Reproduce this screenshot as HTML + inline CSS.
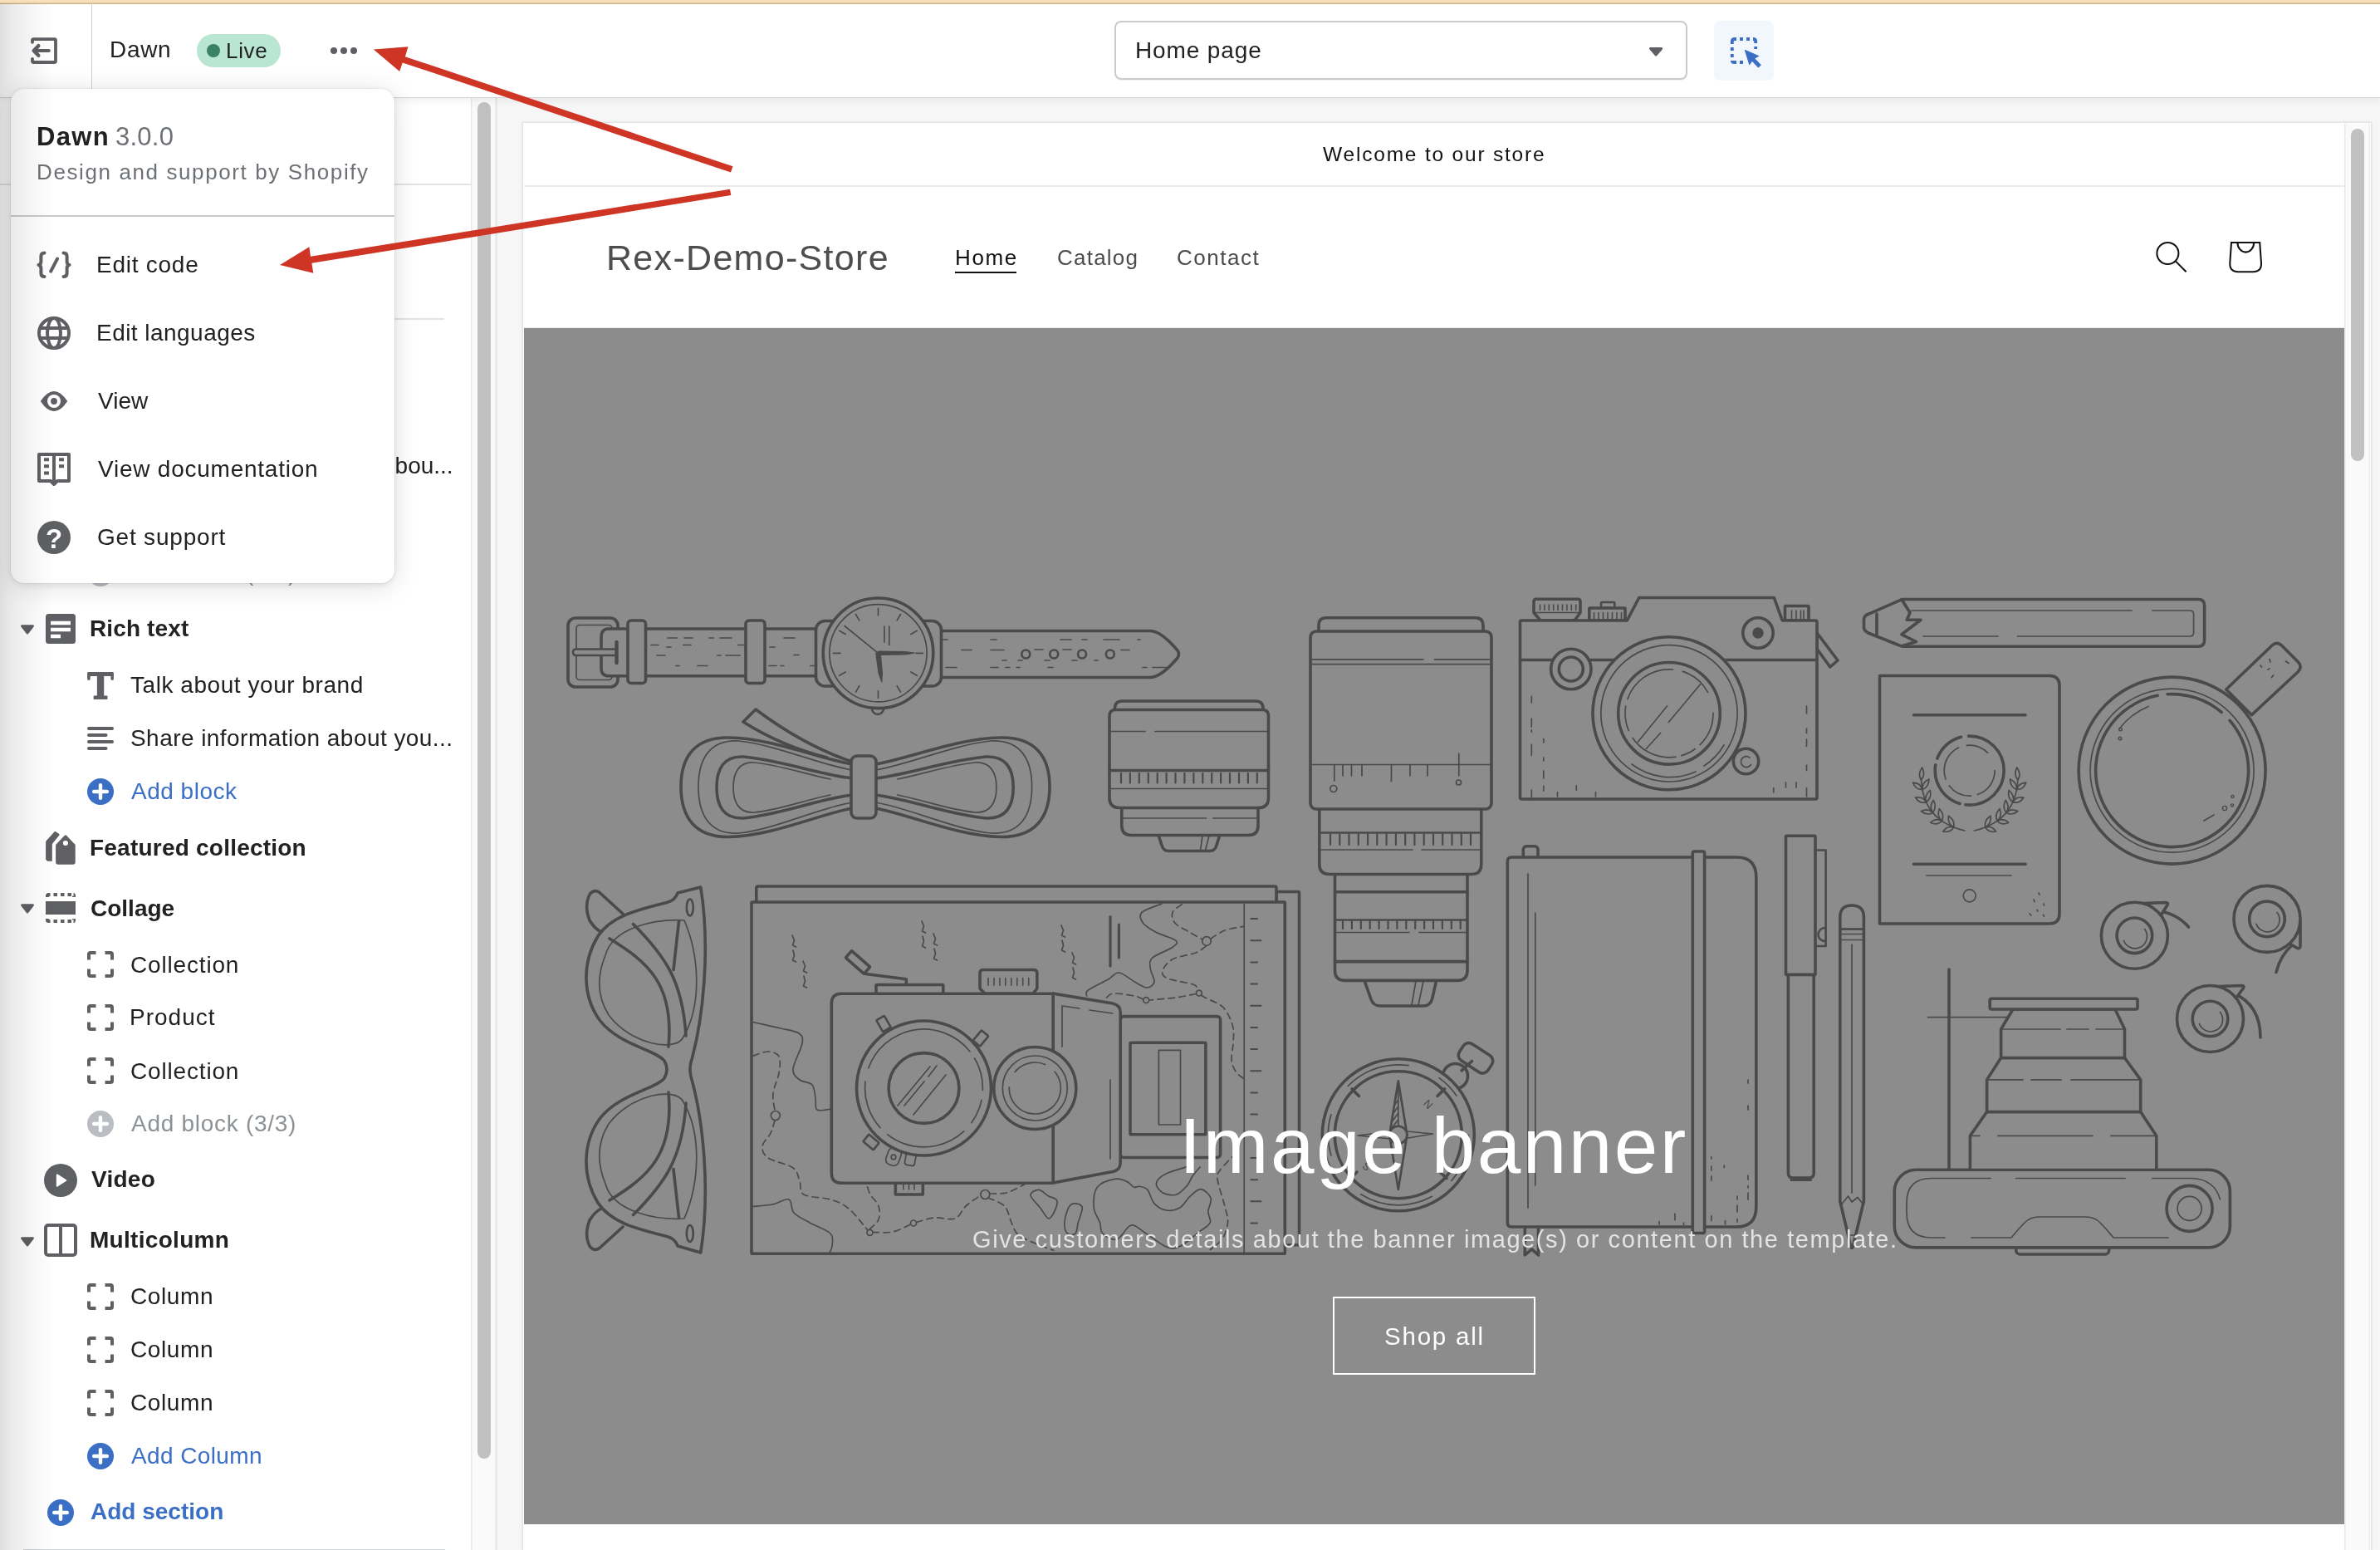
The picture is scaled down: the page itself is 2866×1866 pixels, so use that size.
<!DOCTYPE html>
<html lang="en"><head><meta charset="utf-8"><title>Dawn - Shopify theme editor</title>
<style>
html,body{margin:0;padding:0}
body{width:2866px;height:1866px;position:relative;overflow:hidden;background:#fff;font-family:"Liberation Sans",sans-serif;}
.a{position:absolute;display:block}
.t{position:absolute;display:block;margin:0;padding:0;white-space:nowrap;font-family:"Liberation Sans",sans-serif;text-decoration:none;will-change:transform}
.g{position:absolute;left:0;top:0;width:0;height:0;margin:0;padding:0}
</style></head><body>

<main class="g" aria-label="Theme preview">
<div class="a" style="left:596px;top:117px;width:2270px;height:1749px;background:#f6f6f7"></div>
<div class="a" style="left:630px;top:148px;width:2225px;height:1718px;background:#fff;box-shadow:0 0 0 1.5px #e3e4e6,0 1px 6px rgba(0,0,0,.06)"></div>
<div class="a" id="store" style="left:631px;top:149px;width:2192px;height:1717px;background:#fff;overflow:hidden">
</div>
<div class="a" style="left:631px;top:223px;width:2192px;height:2px;background:#ebebeb"></div>
<p class="t" id="welcome" style="left:1593.00px;top:174.26px;font-size:24.5px;line-height:24.5px;color:#121212;font-weight:400;letter-spacing:1.802px;">Welcome to our store</p>
<h1 class="t" id="rex" style="left:730.25px;top:289.10px;font-size:43px;line-height:43px;color:#4d4d4d;font-weight:400;letter-spacing:1.308px;">Rex-Demo-Store</h1>
<a class="t" id="home" style="left:1149.80px;top:296.99px;font-size:26px;line-height:26px;color:#121212;font-weight:400;letter-spacing:1.603px;">Home</a>
<div class="a" style="left:1150px;top:326.5px;width:74px;height:2.2px;background:#121212"></div>
<a class="t" id="catalog" style="left:1273.00px;top:296.99px;font-size:26px;line-height:26px;color:#4b4b4b;font-weight:400;letter-spacing:1.231px;">Catalog</a>
<a class="t" id="contact" style="left:1417.00px;top:296.99px;font-size:26px;line-height:26px;color:#4b4b4b;font-weight:400;letter-spacing:1.500px;">Contact</a>
<svg class="a" style="left:2580px;top:280px" width="160" height="60" viewBox="2580 280 160 60" fill="none" stroke="#121212" stroke-width="2.05">
<circle cx="2610.4" cy="305" r="13"/><path d="M2619.8 314.4 L2632.6 327.2"/>
<path d="M2687 292 H2721.2 L2723 316.5 Q2723.6 327.2 2713 327.2 H2695.2 Q2684.8 327.2 2685.3 316.5 Z" stroke-linejoin="miter"/>
<path d="M2694.4 292 A9.9 11.6 0 0 0 2714.2 292"/>
</svg>
<div class="a" style="left:631px;top:393.5px;width:2192px;height:1.5px;background:#e9e9e9"></div>
<div class="a" style="left:631px;top:395px;width:2192px;height:1440px;background:#8c8c8c"></div>
<svg class="a" style="left:631px;top:395px" width="2192" height="1440" viewBox="631 395 2192 1440" fill="none" stroke="#4a4a4a" stroke-linecap="round" stroke-linejoin="round">
<g id="watch">
<rect x="684.0" y="744.0" width="60.0" height="83.0" rx="9" stroke-width="3.6" fill="#8c8c8c" />
<rect x="694.0" y="752.5" width="43.0" height="66.0" rx="4" stroke-width="1.7" fill="none" />
<path d="M982 757H733Q724 757 724 767V804Q724 813.8 733 813.8H982" stroke-width="3.6" fill="#8c8c8c" />
<path d="M742.5 781.5H694Q690 781.5 690 785.2Q690 789 694 789H742.5" stroke-width="2.6" fill="#8c8c8c" />
<path d="M742.5 773.0L742.5 798.0" stroke-width="4.4" />
<rect x="756.0" y="747.0" width="21.5" height="75.5" rx="4" stroke-width="3.6" fill="#8c8c8c" />
<rect x="898.0" y="747.0" width="23.0" height="75.5" rx="4" stroke-width="3.6" fill="#8c8c8c" />
<path d="M804 768H815M824 768H834M854 768H859M867 768H881 M784 776.5H793M803 779H808M823 776.5H832M889 776.5H897 M791 789H801M864 789H868M874 789H891 M814 801.5H818M840 801.5H852 M944 768H957M927 779H933M956 788.5H962M926 801.5H935M940 801.5H944M976 801.5H981" stroke-width="1.7" fill="none" />
<path d="M1133 759.5H1385Q1398 759.5 1418 783Q1421 787.5 1418 792Q1398 815.5 1385 815.5H1133Z" stroke-width="3.6" fill="#8c8c8c" />
<circle cx="1235.3" cy="787.5" r="5.0" stroke-width="2.6" fill="#8c8c8c" />
<circle cx="1269.2" cy="787.5" r="5.0" stroke-width="2.6" fill="#8c8c8c" />
<circle cx="1303.0" cy="787.5" r="5.0" stroke-width="2.6" fill="#8c8c8c" />
<circle cx="1336.8" cy="787.5" r="5.0" stroke-width="2.6" fill="#8c8c8c" />
<path d="M1133 770H1141M1193 770H1200M1158 782.5H1170M1193 782.5H1209M1246 782H1256M1280 782H1290M1350 782.5H1360M1207 795H1212M1226 795H1231M1258 795H1264M1291 795H1297M1318 795H1322M1139 803.5H1152M1193 803.5H1202M1211 803.5H1216M1224 803.5H1228M1262 803.5H1268M1376 803.5H1381M1388 803.5H1404M1277 770H1290M1303 770H1309M1329 770H1348M1370 770H1373" stroke-width="1.7" fill="none" />
<rect x="982.5" y="747.5" width="39.5" height="78.5" rx="11" stroke-width="3.6" fill="#8c8c8c" />
<rect x="1093.0" y="747.5" width="40.5" height="78.5" rx="11" stroke-width="3.6" fill="#8c8c8c" />
<circle cx="1057.0" cy="853.0" r="7.0" stroke-width="2.6" fill="#8c8c8c" />
<circle cx="1057.5" cy="786.3" r="66.3" stroke-width="3.6" fill="#8c8c8c" />
<circle cx="1057.5" cy="786.3" r="58.6" stroke-width="1.7" fill="none" />
<path d="M1057.5 740.8L1057.5 732.3M1080.2 746.9L1084.5 739.5M1096.9 763.5L1104.3 759.3M1103.0 786.3L1111.5 786.3M1096.9 809.0L1104.3 813.3M1080.2 825.7L1084.5 833.1M1057.5 831.8L1057.5 840.3M1034.8 825.7L1030.5 833.1M1018.1 809.0L1010.7 813.3M1012.0 786.3L1003.5 786.3M1018.1 763.5L1010.7 759.3M1034.8 746.9L1030.5 739.5" stroke-width="1.7" fill="none" />
<path d="M1065 754V773M1070.8 754V776.5" stroke-width="1.7" fill="none" />
<path d="M1057.5 786.3L1017.0 753.5" stroke-width="1.7" />
<path d="M1057.5 784.2L1090 784.6L1101 786.2L1090 787.8L1057.5 788.4Z" stroke-width="1.2" fill="#4a4a4a" />
<path d="M1054.8 786.3L1058 810L1061.8 821L1062.4 810L1060.2 786.3Z" stroke-width="1.2" fill="#4a4a4a" />
</g>
<g id="bow">
<path d="M996 912C960 903 925 888 895 869L910 854C950 884 990 905 1026 917" stroke-width="3.6" fill="#8c8c8c" />
<path d="M1026.0 920.0C985.0 913.0 930.0 889.0 878.0 888.0C838.0 887.0 820.0 910.0 820.0 947.0C820.0 985.0 838.0 1008.0 878.0 1007.5C930.0 1006.0 985.0 981.0 1026.0 973.0" stroke-width="3.6" fill="none" />
<path d="M1026.0 927.0C985.0 920.0 935.0 897.0 890.0 892.0C856.0 890.0 841.0 912.0 841.0 947.0C841.0 983.0 856.0 1005.0 890.0 1003.0C935.0 998.0 985.0 973.0 1026.0 966.0" stroke-width="1.7" fill="none" />
<path d="M1026.0 937.0C985.0 932.0 940.0 915.0 895.0 911.0C872.0 910.0 863.0 925.0 863.0 948.0C863.0 971.0 872.0 986.0 895.0 985.0C940.0 981.0 985.0 962.0 1026.0 957.0" stroke-width="3.6" fill="none" />
<path d="M1000.0 938.0C970.0 932.0 935.0 920.0 908.0 918.0C890.0 917.0 883.0 930.0 883.0 948.0C883.0 966.0 890.0 979.0 908.0 978.0C935.0 976.0 970.0 963.0 1000.0 957.0" stroke-width="1.7" fill="none" />
<path d="M1054.3 920.0C1096.0 913.0 1152.0 889.0 1204.9 888.0C1245.7 887.0 1264.0 910.0 1264.0 947.0C1264.0 985.0 1245.7 1008.0 1204.9 1007.5C1152.0 1006.0 1096.0 981.0 1054.3 973.0" stroke-width="3.6" fill="none" />
<path d="M1054.3 927.0C1096.0 920.0 1146.9 897.0 1192.7 892.0C1227.3 890.0 1242.6 912.0 1242.6 947.0C1242.6 983.0 1227.3 1005.0 1192.7 1003.0C1146.9 998.0 1096.0 973.0 1054.3 966.0" stroke-width="1.7" fill="none" />
<path d="M1054.3 937.0C1096.0 932.0 1141.8 915.0 1187.6 911.0C1211.1 910.0 1220.2 925.0 1220.2 948.0C1220.2 971.0 1211.1 986.0 1187.6 985.0C1141.8 981.0 1096.0 962.0 1054.3 957.0" stroke-width="3.6" fill="none" />
<path d="M1080.7 938.0C1111.3 932.0 1146.9 920.0 1174.4 918.0C1192.7 917.0 1199.9 930.0 1199.9 948.0C1199.9 966.0 1192.7 979.0 1174.4 978.0C1146.9 976.0 1111.3 963.0 1080.7 957.0" stroke-width="1.7" fill="none" />
<rect x="1025.0" y="910.0" width="30.0" height="75.0" rx="7" stroke-width="3.6" fill="#8c8c8c" />
</g>
<g id="lens1">
<path d="M1395 1005.5L1399.5 1019Q1401.5 1024.5 1407.5 1024.5H1456.5Q1462.5 1024.5 1464.5 1019L1468.8 1005.5" stroke-width="3.6" fill="#8c8c8c" />
<path d="M1448 1006L1445.5 1024M1456 1006L1451.5 1024" stroke-width="1.7" fill="none" />
<path d="M1350.8 972.5V994Q1350.8 1005.5 1362.3 1005.5H1503.5Q1515 1005.5 1515 994V972.5" stroke-width="3.6" fill="#8c8c8c" />
<path d="M1352.0 985.0H1452.5M1461.0 985.0H1513.0" stroke-width="1.7" fill="none" />
<path d="M1342.5 856V853Q1342.5 844 1351.5 844H1512Q1521 844 1521 853V856" stroke-width="3.6" fill="#8c8c8c" />
<path d="M1336 862Q1336 854.5 1343.5 854.5H1520Q1527.5 854.5 1527.5 862V960.5Q1527.5 972.5 1515.5 972.5H1348Q1336 972.5 1336 960.5Z" stroke-width="3.6" fill="#8c8c8c" />
<path d="M1338.0 880.5H1379.0M1391.0 880.5H1525.5" stroke-width="1.7" fill="none" />
<path d="M1336.0 927.5H1527.5" stroke-width="3.6" fill="none" />
<path d="M1350.0 931.0V942.5M1360.9 931.0V942.5M1371.8 931.0V942.5M1382.8 931.0V942.5M1393.7 931.0V942.5M1404.6 931.0V942.5M1415.5 931.0V942.5M1426.4 931.0V942.5M1437.4 931.0V942.5M1448.3 931.0V942.5M1459.2 931.0V942.5M1470.1 931.0V942.5M1481.0 931.0V942.5M1492.0 931.0V942.5M1502.9 931.0V942.5M1513.8 931.0V942.5" stroke-width="2.2" fill="none" />
<path d="M1338.0 949.5H1525.5" stroke-width="1.7" fill="none" />
</g>
<g id="lens2">
<path d="M1643 1180.4L1651 1203Q1654 1211 1662 1211H1714Q1722 1211 1724.5 1203L1729.7 1180.4" stroke-width="3.6" fill="#8c8c8c" />
<path d="M1705 1181L1700 1210M1714 1181L1708 1210" stroke-width="1.7" fill="none" />
<path d="M1607.5 1052.5V1168.5Q1607.5 1180.4 1619.5 1180.4H1755Q1767 1180.4 1767 1168.5V1052.5" stroke-width="3.6" fill="#8c8c8c" />
<path d="M1607.5 1073.8H1767.0" stroke-width="3.6" fill="none" />
<path d="M1608.0 1107.5H1766.5" stroke-width="2.4" fill="none" />
<path d="M1617.0 1109.0V1118.0M1627.9 1109.0V1118.0M1638.8 1109.0V1118.0M1649.7 1109.0V1118.0M1660.6 1109.0V1118.0M1671.5 1109.0V1118.0M1682.4 1109.0V1118.0M1693.3 1109.0V1118.0M1704.2 1109.0V1118.0M1715.1 1109.0V1118.0M1726.0 1109.0V1118.0M1736.9 1109.0V1118.0M1747.8 1109.0V1118.0M1758.7 1109.0V1118.0" stroke-width="2.2" fill="none" />
<path d="M1609.0 1122.5H1697.0M1709.0 1122.5H1765.5" stroke-width="1.7" fill="none" />
<path d="M1607.5 1157.6H1767.0" stroke-width="3.6" fill="none" />
<path d="M1588.8 974V1040.5Q1588.8 1052.5 1600.8 1052.5H1771.8Q1783.8 1052.5 1783.8 1040.5V974" stroke-width="3.6" fill="#8c8c8c" />
<path d="M1589.0 1002.5H1783.5" stroke-width="2.4" fill="none" />
<path d="M1602.0 1004.0V1017.0M1613.3 1004.0V1017.0M1624.5 1004.0V1017.0M1635.8 1004.0V1017.0M1647.1 1004.0V1017.0M1658.3 1004.0V1017.0M1669.6 1004.0V1017.0M1680.9 1004.0V1017.0M1692.2 1004.0V1017.0M1703.4 1004.0V1017.0M1714.7 1004.0V1017.0M1726.0 1004.0V1017.0M1737.2 1004.0V1017.0M1748.5 1004.0V1017.0M1759.8 1004.0V1017.0M1771.0 1004.0V1017.0" stroke-width="2.2" fill="none" />
<path d="M1590.0 1023.0H1701.0M1712.0 1023.0H1782.5" stroke-width="1.7" fill="none" />
<path d="M1588 762V753Q1588 743.8 1597 743.8H1777Q1786 743.8 1786 753V762" stroke-width="3.6" fill="#8c8c8c" />
<rect x="1578.0" y="760.0" width="218.0" height="214.0" rx="7" stroke-width="3.6" fill="#8c8c8c" />
<path d="M1580.0 793.8H1713.8M1727.5 793.8H1794.0" stroke-width="1.7" fill="none" />
<path d="M1580.0 799.6H1794.0" stroke-width="1.7" fill="none" />
<path d="M1580.0 920.5H1794.0" stroke-width="1.7" fill="none" />
<path d="M1606.8 921V940M1675.5 921V940.5M1617 921V933.8M1627.5 921V933.8M1640 921V933.8M1698 921V933.8M1719 921V933.8M1756.8 907V933.8" stroke-width="1.7" fill="none" />
<circle cx="1605.8" cy="949.5" r="4.0" stroke-width="1.7" fill="none" />
<circle cx="1756.5" cy="942.0" r="3.0" stroke-width="1.7" fill="none" />
</g>
<g id="notebook">
<path d="M1836.3 1477V1511L1844.5 1503.8L1852.5 1511V1477" stroke-width="3.6" fill="#8c8c8c" />
<rect x="1834.3" y="1018.8" width="17.7" height="17.2" rx="4" stroke-width="3.6" fill="#8c8c8c" />
<path d="M1820 1032H2091Q2114.8 1032 2114.8 1056V1453Q2114.8 1477 2091 1477H1820Q1815.3 1477 1815.3 1472V1037Q1815.3 1032 1820 1032Z" stroke-width="3.6" fill="#8c8c8c" />
<path d="M1840 1052V1454M1848.8 1099V1427" stroke-width="1.7" fill="none" />
<rect x="2038.3" y="1025.0" width="14.3" height="459.5" rx="2" stroke-width="3.6" fill="#8c8c8c" />
<path d="M2105 1300V1304M2105 1331V1336M2105 1415V1420M2105 1427.5V1430M2105 1436V1444M2060.8 1392.5V1395M2060.8 1404V1409M2060.8 1416V1421M2076.3 1403V1405.5M2092 1440V1444M2092 1451V1459M1998 1470.5V1473.8M2017 1461V1468.8M2027.5 1472V1474.5M2060.8 1463.8V1469.5M2077.5 1469.5V1473.8M2092 1467.5V1471" stroke-width="1.7" fill="none" />
</g>
<g id="pen">
<path d="M2186 1023.5H2198.6V1139H2186" stroke-width="2.6" fill="#8c8c8c" />
<path d="M2197.5 1117A8 8 0 0 0 2197.5 1133" stroke-width="2.6" fill="none" />
<path d="M2153.4 1173V1412Q2153.4 1418 2159 1418H2178.5Q2184.2 1418 2184.2 1412V1173" stroke-width="3.6" fill="#8c8c8c" />
<path d="M2157 1420.5H2180.5" stroke-width="3" fill="none" />
<rect x="2150.5" y="1006.2" width="35.5" height="167.2" rx="1" stroke-width="3.6" fill="#8c8c8c" />
</g>
<g id="pencilv">
<path d="M2215.8 1104Q2215.8 1090 2230 1090Q2244.4 1090 2244.4 1104V1446L2231.5 1500Q2230 1505 2228.6 1500L2215.8 1446Z" stroke-width="3.6" fill="#8c8c8c" />
<path d="M2216 1118.5H2244M2216 1124.5H2244M2216 1131.5H2244" stroke-width="1.7" fill="none" />
<path d="M2216.0 1118.5L2244.0 1118.5" stroke-width="2.4" />
<path d="M2230 1137V1436" stroke-width="1.7" fill="none" />
<path d="M2217.5 1450L2225.5 1440L2230 1447L2237 1441.5L2243 1449" stroke-width="1.7" fill="none" />
<path d="M2226.5 1487L2233.5 1487" stroke-width="1.7" fill="none" />
</g>
<g id="compass">
<g transform="rotate(33 1777 1273.8)">
<rect x="1756.5" y="1261.8" width="41.0" height="24.0" rx="8" stroke-width="3.6" fill="#8c8c8c" />
</g>
<circle cx="1752.5" cy="1295.5" r="15.0" stroke-width="3.6" fill="#8c8c8c" />
<path d="M1760.0 1288.8L1772.5 1277.5" stroke-width="3.6" />
<circle cx="1683.8" cy="1366.3" r="91.5" stroke-width="3.6" fill="#8c8c8c" />
<circle cx="1683.8" cy="1366.3" r="76.5" stroke-width="3.6" fill="#8c8c8c" />
<circle cx="1683.8" cy="1366.3" r="84.5" stroke-width="1.7" fill="none" stroke-dasharray="60 30 90 60 50 40 80 40 30 50.9"/>
<path d="M1628 1311L1636.5 1319.5M1739.5 1311L1731 1319.5M1742 1418.5L1734 1411M1626 1418.5L1634 1411" stroke-width="3.6" fill="none" />
<path d="M1635 1367L1683.8 1361L1725.5 1365L1683.8 1372Z" stroke-width="1.7" fill="none" />
<path d="M1683.8 1301.3L1694.4 1366.3L1683.8 1432L1673.2 1366.3Z" stroke-width="2.6" fill="#8c8c8c" />
<path d="M1683.8 1309V1360M1679.5 1330L1683.8 1324M1678 1340L1683.8 1332M1676.5 1350L1683.8 1340M1675 1359L1683.8 1348" stroke-width="1.7" fill="none" />
<circle cx="1683.8" cy="1366.3" r="10.5" stroke-width="2.6" fill="#8c8c8c" />
<text x="1720" y="1334" font-family="Liberation Sans,sans-serif" font-size="13" fill="#4a4a4a" stroke="none" transform="rotate(45 1720 1329)" text-anchor="middle">N</text>
<text x="1646" y="1408" font-family="Liberation Sans,sans-serif" font-size="13" fill="#4a4a4a" stroke="none" transform="rotate(225 1646 1404)" text-anchor="middle">S</text>
</g>
<g id="glasses">
<path d="M750 1100L722 1074.5Q716 1070 710.5 1076Q703 1090 710 1108Q716 1118 724 1122" stroke-width="3.6" fill="#8c8c8c" />
<path d="M750 1477L722 1502.5Q716 1507 710.5 1501Q703 1487 710 1469Q716 1459 724 1455" stroke-width="3.6" fill="#8c8c8c" />
<path d="M843.8 1068L816 1075Q813 1084 803 1086.5C768 1095 736 1103 720 1127C700 1160 702 1200 722 1228C745 1258 790 1264 800 1277Q806 1287.5 800 1298C790 1311 745 1317 722 1347C702 1375 700 1415 720 1448C736 1472 768 1480 803 1488.5Q813 1491 816 1500L843.8 1508C856 1430 846 1345 832 1296Q830 1287.5 832 1279C846 1230 856 1145 843.8 1068Z" stroke-width="3.6" fill="#8c8c8c" />
<path d="M729 1150.0C738 1116.0 790 1106.0 824 1108.0C842 1150.0 846 1210.0 822 1250.0C812 1266.0 760 1258.0 733 1222.0C718 1198.0 720 1172.0 729 1150.0Z" stroke-width="1.7" fill="none" />
<path d="M762.5 1112.5C800 1150.0 822 1180.0 826 1247.0" stroke-width="3.6" fill="none" />
<path d="M734 1130.0C780 1158.0 812 1185.0 805 1260.0" stroke-width="3.6" fill="none" />
<path d="M817.5 1109.0L811 1167.5" stroke-width="3.6" fill="none" />
<path d="M729 1425.0C738 1459.0 790 1469.0 824 1467.0C842 1425.0 846 1365.0 822 1325.0C812 1309.0 760 1317.0 733 1353.0C718 1377.0 720 1403.0 729 1425.0Z" stroke-width="1.7" fill="none" />
<path d="M762.5 1462.5C800 1425.0 822 1395.0 826 1328.0" stroke-width="3.6" fill="none" />
<path d="M734 1445.0C780 1417.0 812 1390.0 805 1315.0" stroke-width="3.6" fill="none" />
<path d="M817.5 1466.0L811 1407.5" stroke-width="3.6" fill="none" />
<ellipse cx="830.8" cy="1092.5" rx="4" ry="10" stroke-width="2.6"/>
<ellipse cx="830.8" cy="1485" rx="4" ry="10" stroke-width="2.6"/>
</g>
<g id="map">
<rect x="1537.0" y="1073.5" width="27.5" height="425.3" rx="1" stroke-width="3.6" fill="#8c8c8c" />
<rect x="910.8" y="1067.0" width="626.2" height="23.0" rx="2" stroke-width="3.6" fill="#8c8c8c" />
<rect x="905.0" y="1086.0" width="642.3" height="423.3" rx="1" stroke-width="3.6" fill="#8c8c8c" />
<path d="M1498.2 1088.0L1498.2 1507.5" stroke-width="1.7" />
<path d="M1506.3 1106.0H1514M1506.3 1132.2H1518.4M1506.3 1158.4H1514M1506.3 1184.5H1514M1506.3 1210.7H1518.4M1506.3 1236.9H1514M1506.3 1263.1H1514M1506.3 1289.3H1518.4M1506.3 1315.4H1514M1506.3 1341.6H1514M1506.3 1367.8H1518.4M1506.3 1394.0H1514M1506.3 1420.2H1514M1506.3 1446.3H1518.4M1506.3 1472.5H1514" stroke-width="2" fill="none" />
<path d="M1337 1103.5V1163M1347.4 1113V1153" stroke-width="3.2" fill="none" />
<path d="M907.0 1230.5C912.5 1231.8 930.8 1235.8 940.0 1238.0C949.2 1240.2 957.7 1241.0 962.0 1244.0C966.3 1247.0 967.2 1248.8 966.0 1256.0C964.8 1263.2 955.5 1279.7 955.0 1287.0C954.5 1294.3 959.2 1296.8 963.0 1300.0C966.8 1303.2 974.8 1302.3 978.0 1306.0C981.2 1309.7 981.0 1317.0 982.0 1322.0C983.0 1327.0 980.8 1333.8 984.0 1336.0C987.2 1338.2 998.2 1335.2 1001.0 1335.0" stroke-width="1.7" fill="none" />
<path d="M907.0 1452.5C910.8 1452.1 922.8 1451.4 930.0 1450.0C937.2 1448.6 945.7 1442.3 950.0 1444.0C954.3 1445.7 951.8 1455.3 956.0 1460.0C960.2 1464.7 967.7 1467.8 975.0 1472.0C982.3 1476.2 995.5 1480.3 1000.0 1485.0C1004.5 1489.7 1002.2 1496.2 1002.0 1500.0C1001.8 1503.8 999.5 1506.7 999.0 1508.0" stroke-width="1.7" fill="none" />
<path d="M1399.0 1088.0C1395.0 1089.7 1378.8 1094.5 1375.0 1098.4C1371.2 1102.3 1373.6 1107.3 1376.5 1111.3C1379.4 1115.3 1386.0 1119.1 1392.6 1122.6C1399.2 1126.1 1412.8 1129.3 1416.0 1132.3C1419.2 1135.2 1416.7 1136.8 1412.0 1140.3C1407.3 1143.8 1392.2 1148.9 1387.7 1153.2C1383.2 1157.5 1384.9 1161.2 1385.3 1166.0C1385.7 1170.8 1390.7 1178.2 1390.0 1182.0C1389.3 1185.8 1385.2 1189.0 1381.3 1189.0C1377.4 1189.0 1372.4 1185.3 1366.8 1182.3C1361.2 1179.3 1352.8 1171.5 1347.4 1171.0C1342.0 1170.5 1340.7 1175.5 1334.5 1179.0C1328.3 1182.5 1314.6 1188.7 1310.3 1192.0C1306.0 1195.3 1309.0 1197.8 1308.7 1199.0" stroke-width="1.7" fill="none" />
<path d="M1241.0 1439.0C1240.7 1435.5 1247.2 1432.3 1250.8 1432.4C1254.3 1432.5 1258.6 1437.6 1262.3 1439.8C1266.0 1442.0 1271.8 1442.1 1272.9 1445.5C1274.0 1448.9 1270.6 1456.8 1268.8 1460.3C1267.0 1463.8 1265.0 1467.9 1262.3 1466.8C1259.6 1465.7 1256.0 1458.3 1252.4 1453.7C1248.9 1449.1 1241.3 1442.5 1241.0 1439.0Z" stroke-width="1.7" fill="none" />
<path d="M1294.2 1448.8C1296.9 1448.8 1302.5 1449.9 1303.2 1453.7C1303.9 1457.5 1299.7 1466.6 1298.3 1471.8C1296.9 1477.0 1297.2 1482.7 1295.0 1484.9C1292.8 1487.1 1287.4 1487.1 1285.2 1484.9C1283.0 1482.7 1281.6 1477.0 1281.9 1471.8C1282.2 1466.6 1284.8 1457.5 1286.8 1453.7C1288.8 1449.9 1291.5 1448.8 1294.2 1448.8Z" stroke-width="1.7" fill="none" />
<path d="M1342.6 1419.3C1336.6 1420.4 1325.5 1423.5 1321.3 1429.2C1317.1 1434.9 1316.7 1446.6 1317.2 1453.7C1317.7 1460.8 1322.7 1466.6 1324.5 1471.8C1326.3 1477.0 1324.4 1481.5 1327.8 1484.9C1331.2 1488.3 1339.3 1493.7 1345.0 1492.0C1350.7 1490.3 1356.3 1476.2 1362.2 1475.0C1368.1 1473.8 1371.7 1480.2 1380.2 1484.9C1388.7 1489.6 1402.1 1503.5 1413.0 1502.9C1423.9 1502.4 1438.4 1486.8 1445.8 1481.6C1453.2 1476.4 1455.8 1475.6 1457.3 1471.8C1458.8 1468.0 1454.7 1463.5 1454.8 1458.6C1454.9 1453.7 1459.6 1446.8 1458.1 1442.3C1456.6 1437.8 1450.0 1431.9 1445.8 1431.6C1441.6 1431.3 1436.8 1436.9 1432.7 1440.6C1428.6 1444.3 1425.9 1451.0 1421.2 1453.7C1416.5 1456.4 1410.0 1457.8 1404.8 1457.0C1399.6 1456.2 1393.8 1452.9 1390.0 1448.8C1386.2 1444.7 1384.9 1435.8 1381.9 1432.4C1378.9 1429.0 1374.7 1428.8 1372.0 1428.3C1369.3 1427.8 1368.0 1430.2 1365.5 1429.2C1363.0 1428.2 1361.1 1424.2 1357.3 1422.6C1353.5 1420.9 1348.6 1418.2 1342.6 1419.3Z" stroke-width="1.7" fill="none" />
<path d="M1436.0 1403.0C1430.8 1404.6 1412.0 1409.3 1404.8 1412.8C1397.5 1416.3 1393.3 1420.4 1392.5 1424.2C1391.7 1428.0 1395.9 1433.4 1399.9 1435.7C1403.9 1438.0 1411.4 1439.6 1416.3 1438.2C1421.2 1436.8 1426.1 1431.2 1429.4 1427.5C1432.7 1423.8 1433.4 1419.8 1436.0 1416.0C1438.6 1412.2 1443.5 1406.8 1445.0 1405.0" stroke-width="1.7" fill="none" />
<path d="M907.0 1271.0C910.0 1270.2 919.8 1265.8 925.0 1266.0C930.2 1266.2 935.8 1267.7 938.0 1272.0C940.2 1276.3 939.2 1284.7 938.0 1292.0C936.8 1299.3 931.8 1308.5 931.0 1316.0C930.2 1323.5 932.7 1333.5 933.0 1337.0" stroke-width="1.7" stroke-dasharray="7.5 5.5" fill="none"/>
<path d="M933.0 1349.0C932.2 1351.5 930.5 1358.8 928.0 1364.0C925.5 1369.2 918.5 1375.0 918.0 1380.0C917.5 1385.0 918.8 1389.7 925.0 1394.0C931.2 1398.3 948.7 1401.3 955.0 1406.0C961.3 1410.7 960.8 1416.7 963.0 1422.0C965.2 1427.3 961.8 1434.3 968.0 1438.0C974.2 1441.7 991.0 1441.2 1000.0 1444.0C1009.0 1446.8 1014.5 1448.8 1022.0 1455.0C1029.5 1461.2 1041.2 1476.7 1045.0 1481.0" stroke-width="1.7" stroke-dasharray="7.5 5.5" fill="none"/>
<path d="M1051.0 1483.5C1055.0 1483.4 1067.4 1484.6 1075.0 1483.0C1082.6 1481.4 1092.9 1475.5 1096.5 1474.0" stroke-width="1.7" stroke-dasharray="7.5 5.5" fill="none"/>
<path d="M1103.5 1471.5C1107.1 1470.6 1117.2 1466.8 1125.0 1466.0C1132.8 1465.2 1143.7 1469.3 1150.0 1467.0C1156.3 1464.7 1158.0 1456.6 1163.0 1452.0C1168.0 1447.4 1177.2 1441.6 1180.0 1439.5" stroke-width="1.7" stroke-dasharray="7.5 5.5" fill="none"/>
<path d="M1192.0 1437.0C1195.3 1436.8 1205.1 1437.8 1212.0 1436.0C1218.9 1434.2 1230.0 1427.6 1233.6 1425.9" stroke-width="1.7" stroke-dasharray="7.5 5.5" fill="none"/>
<path d="M1047.0 1480.0C1048.8 1478.0 1056.2 1472.7 1058.0 1468.0C1059.8 1463.3 1059.7 1457.0 1058.0 1452.0C1056.3 1447.0 1050.4 1442.3 1048.0 1438.0C1045.6 1433.7 1044.5 1428.0 1043.8 1426.0" stroke-width="1.7" stroke-dasharray="7.5 5.5" fill="none"/>
<path d="M1190.0 1442.0C1193.3 1443.7 1205.1 1447.1 1209.8 1452.1C1214.5 1457.1 1215.3 1466.1 1218.0 1471.8C1220.7 1477.5 1221.0 1482.1 1226.2 1486.5C1231.4 1490.9 1242.1 1494.9 1249.2 1498.0C1256.3 1501.1 1265.5 1504.1 1268.8 1505.3" stroke-width="1.7" stroke-dasharray="7.5 5.5" fill="none"/>
<path d="M1423.2 1088.7C1421.3 1090.3 1413.4 1094.6 1412.0 1098.4C1410.6 1102.2 1411.7 1107.4 1415.0 1111.3C1418.3 1115.2 1426.5 1118.7 1432.0 1122.0C1437.5 1125.3 1445.3 1129.5 1448.0 1131.0" stroke-width="1.7" stroke-dasharray="7.5 5.5" fill="none"/>
<path d="M1458.0 1130.0C1460.8 1128.3 1468.4 1122.5 1475.0 1120.0C1481.6 1117.5 1493.7 1116.1 1497.4 1115.3" stroke-width="1.7" stroke-dasharray="7.5 5.5" fill="none"/>
<path d="M1452.3 1139.0C1450.2 1140.3 1446.7 1144.4 1440.0 1147.0C1433.3 1149.6 1418.7 1151.1 1412.0 1154.8C1405.3 1158.5 1400.6 1165.5 1399.8 1169.4C1399.0 1173.3 1400.7 1175.5 1407.0 1178.2C1413.3 1180.9 1432.0 1183.1 1437.7 1185.5C1443.5 1187.9 1440.9 1191.3 1441.5 1192.5" stroke-width="1.7" stroke-dasharray="7.5 5.5" fill="none"/>
<path d="M1440.0 1196.5C1435.8 1197.2 1424.3 1199.8 1415.0 1201.0C1405.7 1202.2 1389.2 1203.5 1384.0 1204.0" stroke-width="1.7" stroke-dasharray="7.5 5.5" fill="none"/>
<path d="M1376.5 1203.0C1374.9 1202.4 1372.7 1200.4 1366.8 1199.2C1360.9 1198.0 1346.8 1195.6 1341.0 1196.0C1335.2 1196.4 1333.5 1200.7 1332.0 1201.6" stroke-width="1.7" stroke-dasharray="7.5 5.5" fill="none"/>
<path d="M1446.5 1198.0C1447.5 1198.6 1447.8 1199.1 1452.3 1201.6C1456.8 1204.1 1467.8 1207.3 1473.2 1213.0C1478.6 1218.7 1482.5 1228.3 1484.5 1235.5C1486.5 1242.7 1485.2 1249.3 1485.0 1256.0C1484.8 1262.7 1482.5 1270.1 1483.0 1275.8C1483.5 1281.5 1485.6 1286.2 1488.0 1290.0C1490.4 1293.8 1495.8 1297.0 1497.4 1298.4" stroke-width="1.7" stroke-dasharray="7.5 5.5" fill="none"/>
<path d="M1488.4 1388.2C1485.1 1391.8 1472.4 1404.0 1468.7 1409.5C1465.0 1415.0 1465.2 1413.6 1466.3 1421.0C1467.4 1428.4 1473.3 1445.2 1475.3 1453.7C1477.3 1462.2 1479.0 1465.5 1478.5 1471.8C1478.0 1478.1 1475.5 1486.0 1472.0 1491.4C1468.5 1496.9 1459.8 1502.3 1457.3 1504.5" stroke-width="1.7" stroke-dasharray="7.5 5.5" fill="none"/>
<circle cx="933.8" cy="1343.0" r="5.5" stroke-width="1.7" fill="none" />
<circle cx="1047.5" cy="1483.8" r="3.5" stroke-width="1.7" fill="none" />
<circle cx="1100.0" cy="1472.5" r="3.5" stroke-width="1.7" fill="none" />
<circle cx="1186.3" cy="1438.0" r="5.5" stroke-width="1.7" fill="none" />
<circle cx="1453.0" cy="1133.0" r="5.3" stroke-width="1.7" fill="none" />
<circle cx="1380.2" cy="1204.0" r="3.4" stroke-width="1.7" fill="none" />
<circle cx="1443.9" cy="1195.6" r="3.4" stroke-width="1.7" fill="none" />
<path d="M954 1126l2.5 6l-2 6l4 2M955 1144l1.5 6l-2 6l4 2" stroke-width="1.7" fill="none" />
<path d="M967 1157l2.5 6l-2 6l4 2M968 1175l1.5 6l-2 6l4 2" stroke-width="1.7" fill="none" />
<path d="M1110 1109l2.5 6l-2 6l4 2M1111 1127l1.5 6l-2 6l4 2" stroke-width="1.7" fill="none" />
<path d="M1124 1124l2.5 6l-2 6l4 2M1125 1142l1.5 6l-2 6l4 2" stroke-width="1.7" fill="none" />
<path d="M1278 1114l2.5 6l-2 6l4 2M1279 1132l1.5 6l-2 6l4 2" stroke-width="1.7" fill="none" />
<path d="M1291 1147l2.5 6l-2 6l4 2M1292 1165l1.5 6l-2 6l4 2" stroke-width="1.7" fill="none" />
</g>
<g id="tlr">
<rect x="1349.2" y="1223.6" width="120.4" height="169.9" rx="4" stroke-width="3.6" fill="#8c8c8c" />
<rect x="1361.0" y="1255.2" width="90.9" height="110.6" rx="1" stroke-width="3.6" fill="#8c8c8c" />
<rect x="1395.4" y="1264.3" width="26.1" height="89.7" rx="0" stroke-width="1.7" fill="none" />
<path d="M1268.2 1196L1340 1208Q1349.2 1210 1349.2 1219V1400Q1349.2 1408.5 1340 1410.5L1268.2 1424Z" stroke-width="3.6" fill="#8c8c8c" />
<path d="M1279 1260V1211L1300 1214M1312 1216L1340 1220M1337 1300V1395" stroke-width="1.7" fill="none" />
<rect x="1078.3" y="1420.0" width="33.0" height="18.0" rx="0" stroke-width="3.6" fill="#8c8c8c" />
<path d="M1088.0 1426.0V1432.0M1094.5 1426.0V1432.0M1101.0 1426.0V1432.0" stroke-width="1.6" fill="none" />
<rect x="1055.0" y="1185.5" width="80.8" height="14.5" rx="1" stroke-width="3.6" fill="#8c8c8c" />
<path d="M1180 1190V1171.5Q1180 1167.5 1184 1167.5H1244.8Q1248.8 1167.5 1248.8 1171.5V1190L1243.8 1196.3H1186Z" stroke-width="3.6" fill="#8c8c8c" />
<path d="M1190.0 1177.5V1186.3M1197.0 1177.5V1186.3M1203.9 1177.5V1186.3M1210.8 1177.5V1186.3M1217.8 1177.5V1186.3M1224.8 1177.5V1186.3M1231.7 1177.5V1186.3M1238.7 1177.5V1186.3" stroke-width="1.6" fill="none" />
<path d="M1042.5 1172.5L1091.3 1178.8V1185.5" stroke-width="3.6" fill="none" />
<g transform="rotate(41.5 1033 1158.5)">
<rect x="1018.3" y="1153.0" width="29.4" height="11.0" rx="1" stroke-width="3.6" fill="#8c8c8c" />
</g>
<path d="M1013 1196.3H1268.2V1424.3H1013Q1001.3 1424.3 1001.3 1412.3V1208.3Q1001.3 1196.3 1013 1196.3Z" stroke-width="3.6" fill="#8c8c8c" />
<g transform="rotate(-30 1064 1232.5)">
<rect x="1058.5" y="1224.5" width="11.0" height="16.0" rx="1" stroke-width="2.6" fill="#8c8c8c" />
</g>
<g transform="rotate(40 1181 1250)">
<rect x="1175.5" y="1242.0" width="11.0" height="16.0" rx="1" stroke-width="2.6" fill="#8c8c8c" />
</g>
<g transform="rotate(-50 1049 1375)">
<rect x="1043.5" y="1367.0" width="11.0" height="16.0" rx="1" stroke-width="2.6" fill="#8c8c8c" />
</g>
<g transform="rotate(20 1076 1392.5)">
<rect x="1068.0" y="1382.0" width="16.0" height="21.0" rx="6" stroke-width="1.7" fill="#8c8c8c" />
</g>
<circle cx="1076.0" cy="1393.0" r="2.8" stroke-width="1.7" fill="none" />
<g transform="rotate(10 1096 1397)">
<rect x="1090.0" y="1388.0" width="12.0" height="15.0" rx="3" stroke-width="1.7" fill="#8c8c8c" />
</g>
<circle cx="1112.5" cy="1310.0" r="81.0" stroke-width="3.6" fill="#8c8c8c" />
<circle cx="1112.5" cy="1310" r="70.9" stroke-width="1.7" fill="none" stroke-dasharray="150 10 40 12 30 14 100 12 60 17.5" transform="rotate(200 1112.5 1310)"/>
<circle cx="1112.5" cy="1310.0" r="42.4" stroke-width="3.6" fill="#8c8c8c" />
<path d="M1120 1284L1081 1331M1139 1294L1100 1342M1128 1283L1118 1296M1113 1302L1089 1331" stroke-width="1.7" fill="none" />
<circle cx="1246.3" cy="1310.0" r="49.5" stroke-width="3.6" fill="#8c8c8c" />
<circle cx="1246.3" cy="1310.0" r="39.0" stroke-width="1.7" fill="none" />
<circle cx="1246.3" cy="1310" r="31" stroke-width="1.7" fill="none" stroke-dasharray="120 20 40 14.8" transform="rotate(-40 1246.3 1310)"/>
</g>
<g id="cam">
<path d="M2188 762L2213 795L2203.8 803L2188 781.3Z" stroke-width="3.6" fill="#8c8c8c" />
<path d="M1847 737.5V724.5Q1847 721.3 1850.2 721.3H1899.8Q1903 721.3 1903 724.5V737.5L1896 747H1855Z" stroke-width="3.6" fill="#8c8c8c" />
<path d="M1848.0 737.5H1902.0" stroke-width="1.7" fill="none" />
<path d="M1854.5 728.0V734.5M1859.9 728.0V734.5M1865.3 728.0V734.5M1870.7 728.0V734.5M1876.1 728.0V734.5M1881.5 728.0V734.5M1886.9 728.0V734.5M1892.3 728.0V734.5M1897.7 728.0V734.5" stroke-width="1.6" fill="none" />
<rect x="1928.0" y="725.0" width="16.3" height="7.0" rx="1" stroke-width="2.6" fill="#8c8c8c" />
<rect x="1913.8" y="732.0" width="43.2" height="15.0" rx="1" stroke-width="3.6" fill="#8c8c8c" />
<path d="M1919.5 737.5V745.0M1925.0 737.5V745.0M1930.5 737.5V745.0M1936.0 737.5V745.0M1941.5 737.5V745.0M1947.0 737.5V745.0M1952.5 737.5V745.0" stroke-width="1.6" fill="none" />
<rect x="2149.5" y="729.5" width="28.5" height="17.5" rx="1" stroke-width="3.6" fill="#8c8c8c" />
<path d="M2157.5 735.0V745.0M2163.0 735.0V745.0M2168.5 735.0V745.0M2172.0 735.0V745.0" stroke-width="1.6" fill="none" />
<path d="M1832.5 747H1959.3L1973.8 719.5H2136.3L2146.3 747H2186Q2188 747 2188 749V960Q2188 962 2186 962H1832.5Q1830.5 962 1830.5 960V749Q1830.5 747 1832.5 747Z" stroke-width="3.6" fill="#8c8c8c" />
<path d="M1830.5 794.5H2188.0" stroke-width="3.6" fill="none" />
<circle cx="2117.0" cy="762.0" r="18.2" stroke-width="3.6" fill="#8c8c8c" />
<circle cx="2117.0" cy="762.0" r="6.7" stroke-width="0" fill="#4a4a4a" />
<circle cx="1891.8" cy="805.5" r="24.2" stroke-width="3.6" fill="#8c8c8c" />
<circle cx="1891.8" cy="805.5" r="14.5" stroke-width="3.6" fill="#8c8c8c" />
<circle cx="2010.0" cy="858.8" r="92.0" stroke-width="3.6" fill="#8c8c8c" />
<circle cx="2010.0" cy="858.8" r="82.2" stroke-width="1.7" fill="none" />
<path d="M2076 897A76 76 0 0 1 2052 922M2042 929A76 76 0 0 1 1965 920" stroke-width="1.7" fill="none" />
<circle cx="2010.0" cy="858.8" r="61.3" stroke-width="3.6" fill="#8c8c8c" />
<circle cx="2010" cy="858.8" r="53" stroke-width="1.7" fill="none" stroke-dasharray="42 8 18 7 60 10 30 9 70 12 40 26"/>
<path d="M2047.5 823.8L2009.3 869.5M2007.5 850L1972.5 893M1999.5 882.5L1982.5 901.3" stroke-width="1.7" fill="none" />
<circle cx="2102.5" cy="916.5" r="15.2" stroke-width="3.6" fill="#8c8c8c" />
<path d="M2107 912A6.5 6.5 0 1 0 2108.5 920.5" stroke-width="1.7" fill="none" />
<path d="M1844.3 838.3V845.8M1844.3 865V875M1844.3 878.8V881.3M1844.3 896.3V909.5M1858.8 889.5V893.8M1858.8 912V915.8M1858.8 928V937M1858.8 946.3V952M2175.5 850V858.8M2175.5 877V882.5M2175.5 890V898.3M2175.5 921.3V927.5" stroke-width="1.7" fill="none" />
<path d="M1844.3 951V960M1875.5 953.8V958.8M1898.3 945.8V951.3M1921.5 953.8V958.8M2135.8 948.8V953.8M2150.5 942V948M2163 942V948M2175.5 948.8V958.8" stroke-width="1.7" fill="none" />
</g>
<g id="pencilh">
<path d="M2290.5 721.5H2647Q2654.6 721.5 2654.6 729V770.5Q2654.6 778.2 2647 778.2H2290.5L2251 762.5Q2244.5 760 2244.5 755V746Q2244.5 741 2251 738.8Z" stroke-width="3.6" fill="#8c8c8c" />
<path d="M2260.0 739.0L2260.0 763.5" stroke-width="3.6" />
<path d="M2290.5 722.5L2300 737.5L2296.3 746.3H2313L2290 763.8L2307.5 772.5L2291 777.5" stroke-width="3.6" fill="none" />
<path d="M2302 735H2567M2592 735H2637Q2641.6 735 2641.6 739.5V761.5Q2641.6 766 2637 766H2429.5M2406 766H2316" stroke-width="1.7" fill="none" />
</g>
<g id="passport">
<path d="M2263.5 813.5H2468Q2480 813.5 2480 825.5V1100Q2480 1112 2468 1112H2263.5Z" stroke-width="3.6" fill="#8c8c8c" />
<path d="M2304.5 860.7H2439.0" stroke-width="3.6" fill="none" />
<path d="M2304.5 1040.3H2439.0" stroke-width="3.6" fill="none" />
<path d="M2320.0 1054.0H2422.0" stroke-width="1.7" fill="none" />
<circle cx="2371.7" cy="1078.3" r="7.5" stroke-width="1.7" fill="none" />
<circle cx="2371.7" cy="927.6" r="41.5" stroke-width="3.6" fill="none" stroke-dasharray="70 7 60 8 40 9 66.75"/>
<circle cx="2371.7" cy="927.6" r="30.5" stroke-width="1.7" fill="none" stroke-dasharray="38 8 30 9 45 10 28 23.6"/>
<path d="M2313.5 937Q2315.0 988 2366.0 1000" stroke-width="1.7" fill="none" />
<path d="M2313.5 939.0Q2319.1 932.6 2314.6 924.0Q2308.9 931.9 2313.5 939.0" stroke-width="1.7" fill="none" />
<path d="M2314.9 950.5Q2322.8 947.6 2322.9 937.9Q2314.2 942.1 2314.9 950.5" stroke-width="1.7" fill="none" />
<path d="M2314.9 950.5Q2312.9 942.7 2303.6 942.2Q2306.8 950.9 2314.9 950.5" stroke-width="1.7" fill="none" />
<path d="M2319.5 965.6Q2326.5 960.9 2324.3 951.4Q2316.9 957.6 2319.5 965.6" stroke-width="1.7" fill="none" />
<path d="M2319.5 965.6Q2315.7 958.5 2306.6 960.2Q2311.7 967.9 2319.5 965.6" stroke-width="1.7" fill="none" />
<path d="M2327.4 978.2Q2332.8 971.8 2328.2 963.3Q2322.7 971.2 2327.4 978.2" stroke-width="1.7" fill="none" />
<path d="M2327.4 978.2Q2321.8 972.4 2313.5 976.5Q2320.5 982.5 2327.4 978.2" stroke-width="1.7" fill="none" />
<path d="M2338.4 988.3Q2342.0 980.7 2335.3 973.7Q2332.0 982.8 2338.4 988.3" stroke-width="1.7" fill="none" />
<path d="M2338.4 988.3Q2331.5 984.2 2324.6 990.3Q2332.9 994.3 2338.4 988.3" stroke-width="1.7" fill="none" />
<path d="M2352.7 995.9Q2354.4 987.6 2346.3 982.3Q2345.2 992.0 2352.7 995.9" stroke-width="1.7" fill="none" />
<path d="M2352.7 995.9Q2345.0 993.4 2339.7 1001.0Q2348.7 1002.9 2352.7 995.9" stroke-width="1.7" fill="none" />
<path d="M2429.9 937Q2428.4 988 2377.4 1000" stroke-width="1.7" fill="none" />
<path d="M2429.9 939.0Q2424.3 932.6 2428.8 924.0Q2434.5 931.9 2429.9 939.0" stroke-width="1.7" fill="none" />
<path d="M2428.5 950.5Q2420.6 947.6 2420.5 937.9Q2429.2 942.1 2428.5 950.5" stroke-width="1.7" fill="none" />
<path d="M2428.5 950.5Q2430.5 942.7 2439.8 942.2Q2436.6 950.9 2428.5 950.5" stroke-width="1.7" fill="none" />
<path d="M2423.9 965.6Q2416.9 960.9 2419.1 951.4Q2426.5 957.6 2423.9 965.6" stroke-width="1.7" fill="none" />
<path d="M2423.9 965.6Q2427.7 958.5 2436.8 960.2Q2431.7 967.9 2423.9 965.6" stroke-width="1.7" fill="none" />
<path d="M2416.0 978.2Q2410.6 971.8 2415.2 963.3Q2420.7 971.2 2416.0 978.2" stroke-width="1.7" fill="none" />
<path d="M2416.0 978.2Q2421.6 972.4 2429.9 976.5Q2422.9 982.5 2416.0 978.2" stroke-width="1.7" fill="none" />
<path d="M2405.0 988.3Q2401.4 980.7 2408.1 973.7Q2411.4 982.8 2405.0 988.3" stroke-width="1.7" fill="none" />
<path d="M2405.0 988.3Q2411.9 984.2 2418.8 990.3Q2410.5 994.3 2405.0 988.3" stroke-width="1.7" fill="none" />
<path d="M2390.7 995.9Q2389.0 987.6 2397.1 982.3Q2398.2 992.0 2390.7 995.9" stroke-width="1.7" fill="none" />
<path d="M2390.7 995.9Q2398.4 993.4 2403.7 1001.0Q2394.7 1002.9 2390.7 995.9" stroke-width="1.7" fill="none" />
<path d="M2455 1075L2456 1077M2449 1083L2450 1085.5M2461 1088L2461.5 1090M2453 1095.5L2454 1097M2444 1100L2446 1102M2460.5 1101.5L2461.5 1103" stroke-width="1.7" fill="none" />
</g>
<g id="mug">
<path d="M2680.7 830L2736 777Q2742 771.5 2748 777.5L2767.5 797Q2773 803 2767 809L2711.4 860.7Z" stroke-width="3.6" fill="#8c8c8c" />
<path d="M2722 801L2723.5 803M2731 806L2733 805M2733 793.5L2734 797M2752.5 796L2756 798.5M2737.5 813L2735.5 815.5" stroke-width="1.7" fill="none" />
<circle cx="2615.6" cy="927.6" r="112.5" stroke-width="3.6" fill="#8c8c8c" />
<circle cx="2615.6" cy="927.6" r="98.5" stroke-width="1.7" fill="none" />
<circle cx="2615.6" cy="927.6" r="92" stroke-width="3.6" fill="none" stroke-dasharray="300 12 70 14 182.05" transform="rotate(72 2615.6 927.6)"/>
<path d="M2552.5 877Q2565 860 2587 850.5" stroke-width="1.7" fill="none" />
<path d="M2654 988L2666 981" stroke-width="1.7" fill="none" />
<circle cx="2553.5" cy="878.0" r="1.8" stroke-width="1.4" fill="none" />
<circle cx="2553.0" cy="889.0" r="1.8" stroke-width="1.4" fill="none" />
<circle cx="2679.0" cy="973.0" r="2.6" stroke-width="1.4" fill="none" />
<circle cx="2688.0" cy="969.5" r="1.6" stroke-width="1.4" fill="none" />
<circle cx="2688.5" cy="959.0" r="1.6" stroke-width="1.4" fill="none" />
</g>
<g id="tapes">
<path d="M2597 1096Q2622 1100 2635.5 1116" stroke-width="3.6" fill="none" />
<path d="M2580 1087.5L2608 1086.5Q2611.5 1086.5 2610 1089.5L2602 1102" stroke-width="3.6" fill="#8c8c8c" />
<circle cx="2570.4" cy="1126.3" r="40.0" stroke-width="3.6" fill="#8c8c8c" />
<circle cx="2570.4" cy="1126.3" r="21.3" stroke-width="3.6" fill="#8c8c8c" />
<path d="M2582.4 1118.3A14.5 14.5 0 1 1 2557.4 1132.3" stroke-width="1.7" fill="none" />
<path d="M2761 1137Q2746 1150 2741 1170.4" stroke-width="3.6" fill="none" />
<path d="M2770 1110V1139Q2770 1142.5 2766.5 1141.5L2757 1136" stroke-width="3.6" fill="#8c8c8c" />
<circle cx="2730.0" cy="1106.4" r="40.0" stroke-width="3.6" fill="#8c8c8c" />
<circle cx="2730.0" cy="1106.4" r="21.3" stroke-width="3.6" fill="#8c8c8c" />
<path d="M2742.0 1098.4A14.5 14.5 0 1 1 2717.0 1112.4" stroke-width="1.7" fill="none" />
<path d="M2690 1196Q2722 1210 2722 1249" stroke-width="3.6" fill="none" />
<path d="M2672 1187.5L2699 1186.5Q2703 1186.5 2701.5 1189.5L2693 1201" stroke-width="3.6" fill="#8c8c8c" />
<circle cx="2661.5" cy="1226.5" r="40.0" stroke-width="3.6" fill="#8c8c8c" />
<circle cx="2661.5" cy="1226.5" r="21.3" stroke-width="3.6" fill="#8c8c8c" />
<path d="M2673.5 1218.5A14.5 14.5 0 1 1 2648.5 1232.5" stroke-width="1.7" fill="none" />
</g>
<g id="instax">
<path d="M2347 1167V1408M2321.5 1224.7H2418" stroke-width="1.7" fill="none" />
<path d="M2347.0 1167.0L2347.0 1408.0" stroke-width="3.6" />
<rect x="2427.7" y="1496.0" width="112.0" height="14.0" rx="5" stroke-width="3.6" fill="#8c8c8c" />
<rect x="2281.3" y="1408.3" width="404.1" height="93.6" rx="26" stroke-width="3.6" fill="#8c8c8c" />
<path d="M2397 1418.5H2326Q2296 1418.5 2296 1448V1460Q2296 1490 2326 1490H2342M2374 1490H2422Q2432 1478 2438 1472Q2445 1465 2455 1465H2512Q2522 1465 2529 1472Q2535 1478 2545 1490H2611M2427.5 1418.5H2559M2592 1418.5H2640Q2667 1420 2673.4 1444" stroke-width="1.7" fill="none" />
<circle cx="2636.6" cy="1454.9" r="27.5" stroke-width="3.6" fill="#8c8c8c" />
<circle cx="2636.6" cy="1454.9" r="14.5" stroke-width="1.7" fill="none" />
<path d="M2372.4 1406.4V1367.4L2392.6 1338.5H2577.7L2596.8 1367.4V1406.4" stroke-width="3.6" fill="#8c8c8c" />
<path d="M2392.6 1338.5V1299.9L2409.6 1273.5H2558.5L2577.7 1299.9V1338.5Z" stroke-width="3.6" fill="#8c8c8c" />
<path d="M2409.6 1273.5V1239L2424 1215H2547L2558.5 1239V1273.5Z" stroke-width="3.6" fill="#8c8c8c" />
<rect x="2396.2" y="1202.3" width="177.8" height="12.7" rx="2" stroke-width="3.6" fill="#8c8c8c" />
<path d="M2411 1239H2557" stroke-width="1.7" stroke-dasharray="70 8 26 9 100"/>
<path d="M2394 1299.9H2576" stroke-width="1.7" stroke-dasharray="42 10 36 12 100"/>
<path d="M2374 1367.4H2595" stroke-width="1.7" stroke-dasharray="10 22 114 22 100"/>
</g>
</svg>
<h2 class="t" id="imgbanner" style="left:1420.00px;top:1332.41px;font-size:94.5px;line-height:94.5px;color:#fff;font-weight:400;letter-spacing:2.455px;">Image banner</h2>
<p class="t" id="subtitle" style="left:1171.10px;top:1477.85px;font-size:29px;line-height:29px;color:#e3e3e3;font-weight:400;letter-spacing:1.580px;">Give customers details about the banner image(s) or content on the template.</p>
<div class="a" style="left:1605px;top:1561px;width:240px;height:90px;border:2px solid #fff"></div>
<a class="t" id="shopall" style="left:1666.50px;top:1594.03px;font-size:29.5px;line-height:29.5px;color:#fff;font-weight:400;letter-spacing:1.775px;">Shop all</a>
<div class="a" style="left:2823px;top:149px;width:31px;height:1717px;background:#fafafa;box-shadow:inset 1.5px 0 0 #e8e8e8, inset -1.5px 0 0 #ededed"></div>
<div class="a" style="left:2831px;top:155px;width:16px;height:400px;border-radius:8px;background:#c1c1c1"></div>
</main>
<aside class="g" aria-label="Sections">
<div class="a" style="left:0;top:117px;width:567px;height:1749px;background:#fff"></div>
<div class="a" style="left:0;top:221px;width:567px;height:2px;background:#e1e3e5"></div>
<div class="a" style="left:32px;top:383px;width:503px;height:1.5px;background:#e1e3e5"></div>
<div class="t" id="bou" style="left:169.00px;top:547.30px;font-size:28px;line-height:28px;color:#202223;font-weight:400;letter-spacing:0.000px;clip-path:inset(-6px -6px -12px 307.3px);">Give customers details abou...</div>
<div class="a" style="left:28px;top:1864.5px;width:508px;height:1.5px;background:#d2d5d8"></div>
<div class="a" style="left:567px;top:117px;width:29px;height:1749px;background:#fafafa;box-shadow:inset 1.5px 0 0 #e8e8e8"></div>
<div class="a" style="left:595.5px;top:117px;width:3px;height:1749px;background:#e9e9eb"></div>
<div class="a" style="left:575px;top:123px;width:16px;height:1633px;border-radius:8px;background:#c1c1c1"></div>
<svg class="a" style="left:105px;top:674px" width="32" height="32" viewBox="-16 -16 32 32"><circle r="16" fill="#babec3"/><path d="M-7.8 0H7.8M0 -7.8V7.8" stroke="#fff" stroke-width="4.4" stroke-linecap="round"/></svg>
<div class="t" id="addblock0" style="left:158.00px;top:676.30px;font-size:28px;line-height:28px;color:#8c9196;font-weight:400;letter-spacing:0.714px;">Add block (3/3)</div>
<svg class="a" style="left:23px;top:750px" width="20" height="16" viewBox="-10 -8 20 16"><path d="M-6.6 -4.4 L6.6 -4.4 L0 4.2 Z" fill="#5e6064" stroke="#5e6064" stroke-width="2.6" stroke-linejoin="round"/></svg>
<svg class="a" style="left:55px;top:739px" width="36" height="36" viewBox="0 0 36 36"><rect width="36" height="36" rx="3.5" fill="#5e6064"/><path d="M6 11H30M6 19H30M6 27H18" stroke="#fff" stroke-width="4.6"/></svg>
<h3 class="t" id="richtext" style="left:108.00px;top:743.30px;font-size:28px;line-height:28px;color:#202223;font-weight:700;letter-spacing:0.125px;">Rich text</h3>
<span class="t" id="ticon" style="left:104.50px;top:805.10px;font-size:43px;line-height:43px;color:#5e6064;font-weight:700;letter-spacing:0.000px;font-family:'DejaVu Serif',serif;text-shadow:0 .7px 0 #5e6064,0 -.7px 0 #5e6064;">T</span>
<div class="t" id="talk" style="left:157.00px;top:811.30px;font-size:28px;line-height:28px;color:#202223;font-weight:400;letter-spacing:0.550px;">Talk about your brand</div>
<svg class="a" style="left:104px;top:873px" width="34" height="32" viewBox="104 873 34 32"><path d="M107 877H135M107 885H127.5M107 893H135M107 901H127.5" stroke="#5e6064" stroke-width="4" stroke-linecap="round"/></svg>
<div class="t" id="share" style="left:157.00px;top:875.30px;font-size:28px;line-height:28px;color:#202223;font-weight:400;letter-spacing:0.448px;">Share information about you...</div>
<svg class="a" style="left:105px;top:937px" width="32" height="32" viewBox="-16 -16 32 32"><circle r="16" fill="#3b6fc6"/><path d="M-7.8 0H7.8M0 -7.8V7.8" stroke="#fff" stroke-width="4.4" stroke-linecap="round"/></svg>
<a class="t" id="addblock" style="left:158.00px;top:938.80px;font-size:28px;line-height:28px;color:#3b6fc6;font-weight:400;letter-spacing:0.500px;">Add block</a>
<svg class="a" style="left:54px;top:1000px" width="38" height="42" viewBox="54 1000 38 42">
<path d="M67.1 1017.8 Q67.1 1017.1 67.6 1016.6 L77.6 1005.9 Q78.9 1004.6 80.2 1005.9 L90.2 1016.6 Q90.7 1017.1 90.7 1017.8 V1037.7 Q90.7 1040.7 87.7 1040.7 H70.1 Q67.1 1040.7 67.1 1037.7 Z" fill="#5e6064"/>
<circle cx="78.9" cy="1015" r="3.1" fill="#fff"/>
<path d="M65.6 1001.2 Q66.4 1000.6 67.2 1001.2 L71.2 1003.9 Q72 1004.6 71.4 1005.4 L63.6 1015 Q62.8 1016 62.8 1017.5 V1036.8 H57.8 Q57.2 1036.8 56.7 1036.3 L55.6 1035.2 Q55.1 1034.7 55.1 1034 V1014 Q55.1 1013 55.7 1012.3 Z" fill="#5e6064"/>
</svg>
<h3 class="t" id="featured" style="left:108.00px;top:1006.80px;font-size:28px;line-height:28px;color:#202223;font-weight:700;letter-spacing:0.222px;">Featured collection</h3>
<svg class="a" style="left:23px;top:1086px" width="20" height="16" viewBox="-10 -8 20 16"><path d="M-6.6 -4.4 L6.6 -4.4 L0 4.2 Z" fill="#5e6064" stroke="#5e6064" stroke-width="2.6" stroke-linejoin="round"/></svg>
<svg class="a" style="left:54px;top:1074px" width="38" height="38" viewBox="54 1074 38 38">
<rect x="55" y="1085" width="36" height="16" fill="#5e6064"/>
<path d="M57 1080 V1078.5 Q57 1077 58.5 1077 H60.5 M64.5 1077 H69 M73 1077 H77.5 M81.5 1077 H86 M88.5 1077 Q89 1077 89 1078.5 V1080" fill="none" stroke="#5e6064" stroke-width="4"/>
<path d="M57 1106 V1107.5 Q57 1109 58.5 1109 H60.5 M64.5 1109 H69 M73 1109 H77.5 M81.5 1109 H86 M88.5 1109 Q89 1109 89 1107.5 V1106" fill="none" stroke="#5e6064" stroke-width="4"/>
</svg>
<h3 class="t" id="collage" style="left:109.00px;top:1080.05px;font-size:28px;line-height:28px;color:#202223;font-weight:700;letter-spacing:-0.000px;">Collage</h3>
<svg class="a" style="left:103px;top:1143px" width="36" height="36" viewBox="-18 -18 36 36"><path d="M-14 -5.5 L-14 -12 Q-14 -14 -12 -14 L-5.5 -14 M-14 5.5 L-14 12 Q-14 14 -12 14 L-5.5 14 M14 -5.5 L14 -12 Q14 -14 12 -14 L5.5 -14 M14 5.5 L14 12 Q14 14 12 14 L5.5 14 " fill="none" stroke="#5e6064" stroke-width="4" stroke-linecap="butt" stroke-linejoin="round"/></svg>
<div class="t" id="coll1" style="left:157.00px;top:1147.55px;font-size:28px;line-height:28px;color:#202223;font-weight:400;letter-spacing:0.830px;">Collection</div>
<svg class="a" style="left:103px;top:1207px" width="36" height="36" viewBox="-18 -18 36 36"><path d="M-14 -5.5 L-14 -12 Q-14 -14 -12 -14 L-5.5 -14 M-14 5.5 L-14 12 Q-14 14 -12 14 L-5.5 14 M14 -5.5 L14 -12 Q14 -14 12 -14 L5.5 -14 M14 5.5 L14 12 Q14 14 12 14 L5.5 14 " fill="none" stroke="#5e6064" stroke-width="4" stroke-linecap="butt" stroke-linejoin="round"/></svg>
<div class="t" id="product" style="left:156.00px;top:1211.30px;font-size:28px;line-height:28px;color:#202223;font-weight:400;letter-spacing:1.000px;">Product</div>
<svg class="a" style="left:103px;top:1271px" width="36" height="36" viewBox="-18 -18 36 36"><path d="M-14 -5.5 L-14 -12 Q-14 -14 -12 -14 L-5.5 -14 M-14 5.5 L-14 12 Q-14 14 -12 14 L-5.5 14 M14 -5.5 L14 -12 Q14 -14 12 -14 L5.5 -14 M14 5.5 L14 12 Q14 14 12 14 L5.5 14 " fill="none" stroke="#5e6064" stroke-width="4" stroke-linecap="butt" stroke-linejoin="round"/></svg>
<div class="t" id="coll2" style="left:157.00px;top:1275.80px;font-size:28px;line-height:28px;color:#202223;font-weight:400;letter-spacing:0.830px;">Collection</div>
<svg class="a" style="left:105px;top:1337px" width="32" height="32" viewBox="-16 -16 32 32"><circle r="16" fill="#babec3"/><path d="M-7.8 0H7.8M0 -7.8V7.8" stroke="#fff" stroke-width="4.4" stroke-linecap="round"/></svg>
<div class="t" id="addblock3" style="left:158.00px;top:1339.30px;font-size:28px;line-height:28px;color:#8c9196;font-weight:400;letter-spacing:0.714px;">Add block (3/3)</div>
<svg class="a" style="left:53px;top:1401px" width="40" height="40" viewBox="-20 -20 40 40"><circle r="20" fill="#5e6064"/><path d="M-4.2 -6.6 L6.3 0 L-4.2 6.6 Z" fill="#fff" stroke="#fff" stroke-width="2" stroke-linejoin="round"/></svg>
<h3 class="t" id="video" style="left:110.00px;top:1406.30px;font-size:28px;line-height:28px;color:#202223;font-weight:700;letter-spacing:0.250px;">Video</h3>
<svg class="a" style="left:23px;top:1486.5px" width="20" height="16" viewBox="-10 -8 20 16"><path d="M-6.6 -4.4 L6.6 -4.4 L0 4.2 Z" fill="#5e6064" stroke="#5e6064" stroke-width="2.6" stroke-linejoin="round"/></svg>
<svg class="a" style="left:53px;top:1472.5px" width="40" height="40" viewBox="0 0 40 40"><rect x="2" y="2" width="36" height="36" rx="3" fill="none" stroke="#5e6064" stroke-width="4"/><path d="M20 2V38" stroke="#5e6064" stroke-width="4"/></svg>
<h3 class="t" id="multicolumn" style="left:108.00px;top:1478.80px;font-size:28px;line-height:28px;color:#202223;font-weight:700;letter-spacing:0.300px;">Multicolumn</h3>
<svg class="a" style="left:103px;top:1543px" width="36" height="36" viewBox="-18 -18 36 36"><path d="M-14 -5.5 L-14 -12 Q-14 -14 -12 -14 L-5.5 -14 M-14 5.5 L-14 12 Q-14 14 -12 14 L-5.5 14 M14 -5.5 L14 -12 Q14 -14 12 -14 L5.5 -14 M14 5.5 L14 12 Q14 14 12 14 L5.5 14 " fill="none" stroke="#5e6064" stroke-width="4" stroke-linecap="butt" stroke-linejoin="round"/></svg>
<div class="t" id="col1" style="left:157.00px;top:1546.80px;font-size:28px;line-height:28px;color:#202223;font-weight:400;letter-spacing:0.600px;">Column</div>
<svg class="a" style="left:103px;top:1607px" width="36" height="36" viewBox="-18 -18 36 36"><path d="M-14 -5.5 L-14 -12 Q-14 -14 -12 -14 L-5.5 -14 M-14 5.5 L-14 12 Q-14 14 -12 14 L-5.5 14 M14 -5.5 L14 -12 Q14 -14 12 -14 L5.5 -14 M14 5.5 L14 12 Q14 14 12 14 L5.5 14 " fill="none" stroke="#5e6064" stroke-width="4" stroke-linecap="butt" stroke-linejoin="round"/></svg>
<div class="t" id="col2" style="left:157.00px;top:1610.80px;font-size:28px;line-height:28px;color:#202223;font-weight:400;letter-spacing:0.600px;">Column</div>
<svg class="a" style="left:103px;top:1671px" width="36" height="36" viewBox="-18 -18 36 36"><path d="M-14 -5.5 L-14 -12 Q-14 -14 -12 -14 L-5.5 -14 M-14 5.5 L-14 12 Q-14 14 -12 14 L-5.5 14 M14 -5.5 L14 -12 Q14 -14 12 -14 L5.5 -14 M14 5.5 L14 12 Q14 14 12 14 L5.5 14 " fill="none" stroke="#5e6064" stroke-width="4" stroke-linecap="butt" stroke-linejoin="round"/></svg>
<div class="t" id="col3" style="left:157.00px;top:1674.80px;font-size:28px;line-height:28px;color:#202223;font-weight:400;letter-spacing:0.600px;">Column</div>
<svg class="a" style="left:105px;top:1736.75px" width="32" height="32" viewBox="-16 -16 32 32"><circle r="16" fill="#3b6fc6"/><path d="M-7.8 0H7.8M0 -7.8V7.8" stroke="#fff" stroke-width="4.4" stroke-linecap="round"/></svg>
<a class="t" id="addcolumn" style="left:158.00px;top:1738.80px;font-size:28px;line-height:28px;color:#3b6fc6;font-weight:400;letter-spacing:0.386px;">Add Column</a>
<svg class="a" style="left:57px;top:1804.75px" width="32" height="32" viewBox="-16 -16 32 32"><circle r="16" fill="#3b6fc6"/><path d="M-7.8 0H7.8M0 -7.8V7.8" stroke="#fff" stroke-width="4.4" stroke-linecap="round"/></svg>
<a class="t" id="addsection" style="left:109.00px;top:1805.80px;font-size:28px;line-height:28px;color:#3b6fc6;font-weight:700;letter-spacing:0.000px;">Add section</a>
</aside>
<header class="g">
<div class="a" style="left:0;top:0;width:2866px;height:117px;background:#fff;box-shadow:0 1px 0 #d3d5d8,0 3px 10px rgba(0,0,0,.08)"></div>
<div class="a" style="left:0;top:0;width:2866px;height:4.5px;background:linear-gradient(#f9e0bc 0,#f7dbb2 3px,#cbb48e 4.5px)"></div>
<div class="a" style="left:109.5px;top:4px;width:1.6px;height:113px;background:#cfd1d4"></div>
<svg class="a" style="left:33px;top:41px" width="40" height="40" viewBox="33 41 40 40" fill="none" stroke="#5e6064" stroke-width="3.8" stroke-linejoin="round" stroke-linecap="round">
<path d="M39 50.8 V48.6 Q39 47.1 40.5 47.1 H65.5 Q67 47.1 67 48.6 V73.5 Q67 75 65.5 75 H40.5 Q39 75 39 73.5 V71"/>
<path d="M41.5 61 H58.9"/><path d="M46.3 55.2 L40.7 61 L46.3 66.8" stroke-width="4.4"/></svg>
<span class="t" id="dawn" style="left:132.00px;top:46.10px;font-size:28px;line-height:28px;color:#202223;font-weight:400;letter-spacing:0.667px;">Dawn</span>
<div class="a" style="left:237px;top:41px;width:101px;height:40px;border-radius:20px;background:#b9e6d3"></div>
<div class="a" style="left:249px;top:53px;width:16px;height:16px;border-radius:8px;background:#3a8265"></div>
<span class="t" id="live" style="left:272.00px;top:48.49px;font-size:26px;line-height:26px;color:#202223;font-weight:400;letter-spacing:0.667px;">Live</span>
<svg class="a" style="left:394px;top:53px" width="40" height="16" viewBox="394 53 40 16"><circle cx="402" cy="61" r="4" fill="#5e6064"/><circle cx="414" cy="61" r="4" fill="#5e6064"/><circle cx="426" cy="61" r="4" fill="#5e6064"/></svg>
<div class="a" style="left:1342px;top:25px;width:686px;height:67px;border:2px solid #c9cccf;border-radius:8px;background:#fff;box-shadow:0 1px 0 rgba(0,0,0,.05)"></div>
<span class="t" id="homepage" style="left:1367.00px;top:47.30px;font-size:28px;line-height:28px;color:#202223;font-weight:400;letter-spacing:0.875px;">Home page</span>
<svg class="a" style="left:1982px;top:52px" width="24" height="20" viewBox="1982 52 24 20"><path d="M1987.5 58.5 H2000.7 L1994.1 66 Z" fill="#5e6064" stroke="#5e6064" stroke-width="3" stroke-linejoin="round"/></svg>
<div class="a" style="left:2064px;top:25px;width:72px;height:72px;border-radius:8px;background:#f2f7fe"></div>
<svg class="a" style="left:2080px;top:41px" width="44" height="44" viewBox="2080 41 44 44">
<path d="M2085.8 53 V50 Q2085.8 47 2088.8 47 H2091 M2095 47 H2099 M2103 47 H2107 M2111 47 H2111.2 Q2114.2 47 2114.2 50 V52 M2114.2 56 V59 M2085.8 57 V61 M2085.8 65 V69 M2085.8 73 Q2085.8 75 2088.8 75 H2091 M2095 75 H2099" fill="none" stroke="#3b6fc6" stroke-width="3.8"/>
<path d="M2101.5 60.5 L2117.5 67.5 L2112.5 70.3 L2120 78.2 L2117.3 80.8 L2109.8 72.9 L2106.8 77.5 Z" fill="#3b6fc6" stroke="#3b6fc6" stroke-width="1.2" stroke-linejoin="round"/>
</svg>
</header>
<div class="g" role="menu" aria-label="Theme actions">
<div class="a" style="left:13px;top:107px;width:462px;height:595px;border-radius:16px;background:#fff;box-shadow:0 0 0 1px rgba(63,63,68,.05),0 2px 8px rgba(23,24,24,.09),0 4px 32px rgba(23,24,24,.13)"></div>
<div class="t" id="pdawn" style="left:44.00px;top:148.76px;font-size:31px;line-height:31px;color:#202223;font-weight:700;letter-spacing:1.333px;">Dawn</div>
<div class="t" id="pver" style="left:138.50px;top:148.76px;font-size:31px;line-height:31px;color:#6d7175;font-weight:400;letter-spacing:0.250px;">3.0.0</div>
<p class="t" id="pdesign" style="left:44.00px;top:193.99px;font-size:26px;line-height:26px;color:#6d7175;font-weight:400;letter-spacing:1.607px;">Design and support by Shopify</p>
<div class="a" style="left:13px;top:259px;width:462px;height:2px;background:#c9cccf"></div>
<svg class="a" style="left:41px;top:299px" width="48" height="40" viewBox="41 299 48 40" fill="none" stroke="#5e6064" stroke-width="4" stroke-linecap="round" stroke-linejoin="round">
<path d="M53.5 304.6 Q49.4 304.6 49.4 308.6 V314.5 Q49.4 318.7 46.4 318.9 Q49.4 319.1 49.4 323.3 V329 Q49.4 333 53.5 333"/>
<path d="M76.5 304.6 Q80.6 304.6 80.6 308.6 V314.5 Q80.6 318.7 83.6 318.9 Q80.6 319.1 80.6 323.3 V329 Q80.6 333 76.5 333"/>
<path d="M69 311.6 L61.2 326.6"/></svg>
<a class="t" id="editcode" style="left:115.50px;top:305.30px;font-size:28px;line-height:28px;color:#202223;font-weight:400;letter-spacing:0.750px;">Edit code</a>
<svg class="a" style="left:43px;top:379px" width="44" height="44" viewBox="-22 -22 44 44" fill="none" stroke="#5e6064" stroke-width="4">
<circle r="18"/><ellipse rx="8" ry="18"/><path d="M-17 -6H17M-17 6H17"/></svg>
<a class="t" id="editlang" style="left:115.50px;top:386.80px;font-size:28px;line-height:28px;color:#202223;font-weight:400;letter-spacing:0.462px;">Edit languages</a>
<svg class="a" style="left:45px;top:467px" width="40" height="32" viewBox="-20 -16 40 32">
<path d="M-15.3 0 Q-7.6 -11.4 0 -11.4 Q7.6 -11.4 15.3 0 Q7.6 11.4 0 11.4 Q-7.6 11.4 -15.3 0 Z" fill="#5e6064" stroke="#5e6064" stroke-width="1.4" stroke-linejoin="round"/><circle r="8" fill="#fff"/><circle r="3.9" fill="#5e6064"/></svg>
<a class="t" id="view" style="left:117.50px;top:468.80px;font-size:28px;line-height:28px;color:#202223;font-weight:400;letter-spacing:0.000px;">View</a>
<svg class="a" style="left:43px;top:541px" width="44" height="46" viewBox="43 541 44 46">
<path d="M47 547 H83 V579 H69 L65 583 L61 579 H47 Z M65 547 V580" fill="none" stroke="#5e6064" stroke-width="4" stroke-linejoin="round"/>
<path d="M53 553.2H59M53 561.3H59M53 569.4H59M71 553.2H77M71 561.3H77" stroke="#5e6064" stroke-width="4"/></svg>
<a class="t" id="viewdoc" style="left:117.50px;top:550.80px;font-size:28px;line-height:28px;color:#202223;font-weight:400;letter-spacing:0.765px;">View documentation</a>
<svg class="a" style="left:45px;top:627px" width="40" height="40" viewBox="-20 -20 40 40"><circle r="20" fill="#5e6064"/></svg>
<span class="t" id="qmark" style="left:55.30px;top:631.57px;font-size:33px;line-height:33px;color:#fff;font-weight:700;letter-spacing:0.000px;">?</span>
<a class="t" id="getsupport" style="left:116.50px;top:633.30px;font-size:28px;line-height:28px;color:#202223;font-weight:400;letter-spacing:0.800px;">Get support</a>
</div>
<svg class="a" style="left:0;top:0" width="2866" height="400" viewBox="0 0 2866 400">
<g fill="#cf3525" stroke="none">
<path d="M882.5 200.3 L880 207.6 L484.7 75.4 L481.2 86.1 L449.8 59.4 L491.4 56.2 L487.9 68.2 Z"/>
<path d="M879 227.7 L880.3 235 L375.4 316.8 L377.3 328.8 L337 319.1 L372.4 297.2 L374 308.8 Z"/>
</g></svg>
<div class="a" style="left:0;top:4px;width:70px;height:1862px;background:linear-gradient(to right,rgba(0,0,0,.125) 0,rgba(0,0,0,.088) 12px,rgba(0,0,0,.06) 25px,rgba(0,0,0,.03) 42px,rgba(0,0,0,.008) 60px,rgba(0,0,0,0) 67px);pointer-events:none"></div>
</body></html>
